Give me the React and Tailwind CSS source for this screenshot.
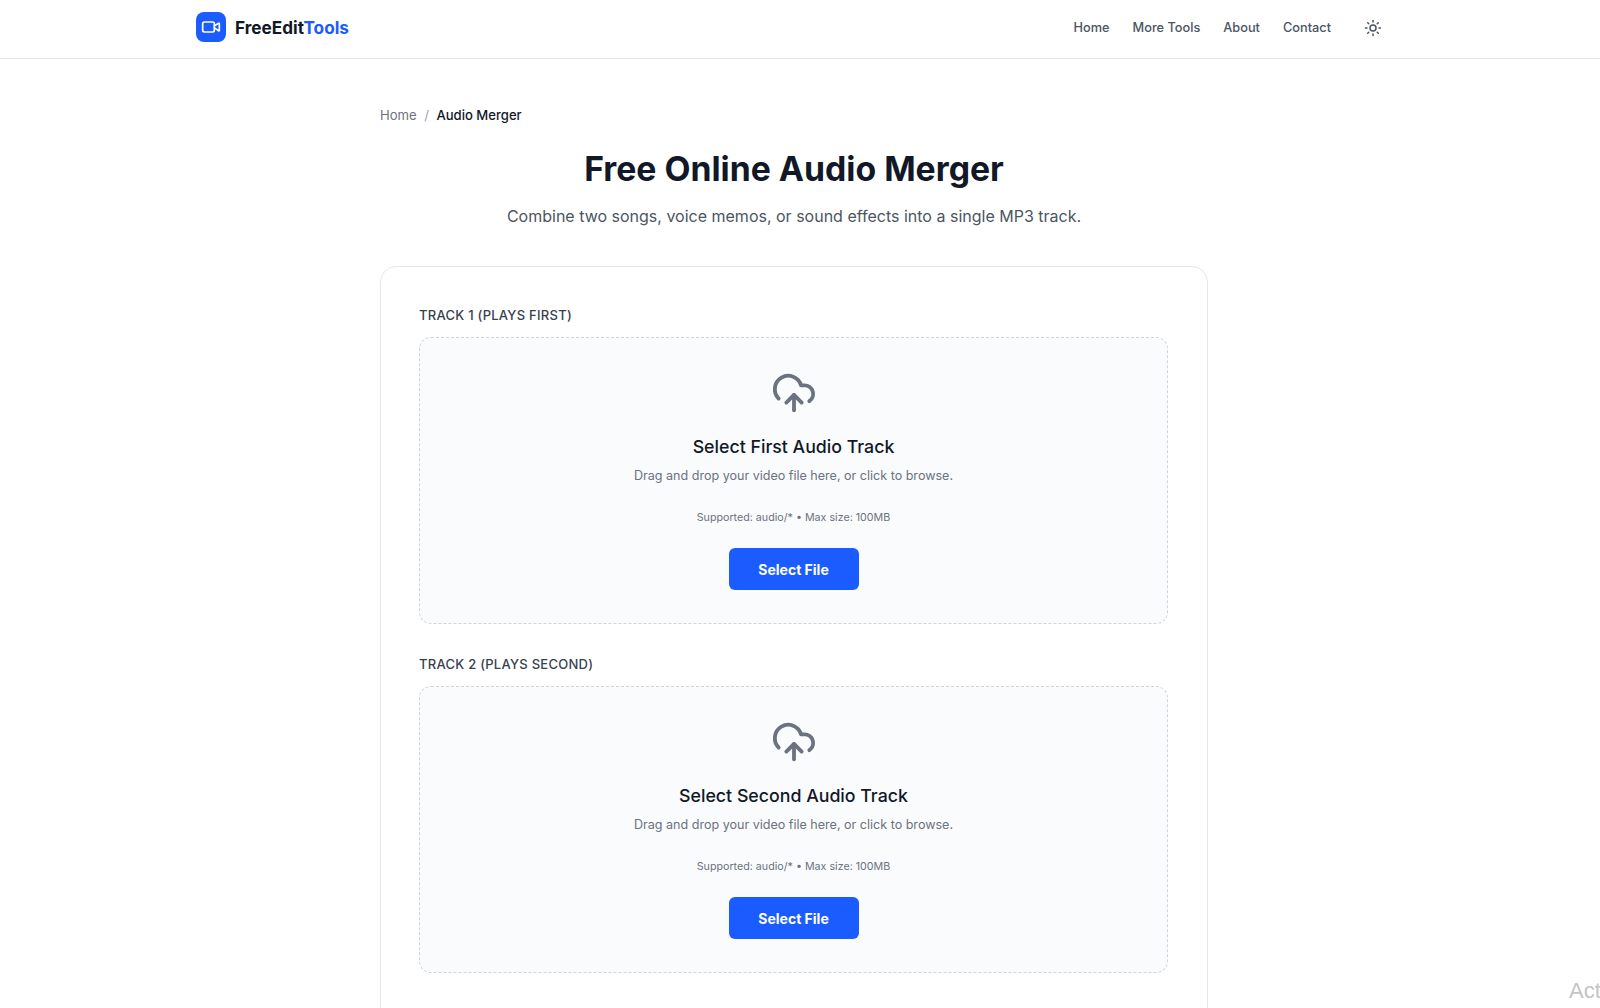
import React from "react";
import { CloudUpload, Sun, Video } from "lucide-react";

function Drop({ title }) {
  return (
    <div className="h-[287px] rounded-xl border border-dashed border-[#d1d5db] bg-[#fafbfd] flex flex-col items-center pt-[32px]">
      <CloudUpload className="w-[46px] h-[46px] text-[#6b7280]" strokeWidth={2} />
      <h3 className="mt-[17px] text-[17.75px] leading-7 font-medium text-[#111827]">{title}</h3>
      <p className="mt-[5px] text-[12.55px] leading-5 text-[#6b7280]">Drag and drop your video file here, or click to browse.</p>
      <p className="mt-[22px] text-[10.7px] leading-5 text-[#6b7280]">Supported: audio/* • Max size: 100MB</p>
      <button className="mt-[20px] w-[130px] h-[42px] rounded-md bg-[#1a5cff] text-white text-[14px] font-bold">Select File</button>
    </div>
  );
}

export default function App() {
  return (
    <div className="relative h-[1008px] overflow-hidden bg-white font-['Inter',sans-serif]">
      <header className="h-[59px] border-b border-[#e5e7eb] pr-3">
        <div className="mx-auto w-[1196px] h-[54px] flex items-center justify-between">
          <div className="flex items-center gap-[9px]">
            <div className="w-[30px] h-[30px] rounded-lg bg-[#1a5cff] flex items-center justify-center">
              <Video className="w-[20px] h-[20px] text-white" strokeWidth={2} />
            </div>
            <span className="mt-[1px] text-[17.2px] font-bold text-[#111827]">FreeEdit<span className="text-[#1a5cff]">Tools</span></span>
          </div>
          <nav className="mt-[1px] flex items-center gap-[23px] text-[12.75px] font-medium text-[#4b5563]">
            <a>Home</a>
            <a>More Tools</a>
            <a>About</a>
            <a>Contact</a>
            <Sun className="ml-[10px] mr-[10px] w-[18px] h-[18px] text-[#4b5563]" />
          </nav>
        </div>
      </header>
      <div className="w-[1588px]">
        <main className="mx-auto w-[828px] pt-[46px]">
          <div className="flex items-center gap-[7.5px] text-[13.1px] leading-5">
            <span className="text-[#6b7280]">Home</span>
            <span className="text-[#9ca3af]">/</span>
            <span className="text-[#111827] font-medium">Audio Merger</span>
          </div>
          <h1 className="mt-[20px] text-center text-[33.75px] leading-[48px] font-bold text-[#111827]">Free Online Audio Merger</h1>
          <p className="mt-[11px] text-center text-[16px] leading-6 text-[#4b5563]">Combine two songs, voice memos, or sound effects into a single MP3 track.</p>
          <section className="mt-[38px] rounded-2xl border border-[#e5e7eb] bg-white pl-[38px] pr-[39px] pt-[38px] pb-10 h-[800px]">
            <div className="text-[13px] leading-5 font-medium tracking-[0.02em] text-[#374151]">TRACK 1 (PLAYS FIRST)</div>
            <div className="mt-[12px]"><Drop title="Select First Audio Track" /></div>
            <div className="mt-[30px] text-[13px] leading-5 font-medium tracking-[0.02em] text-[#374151]">TRACK 2 (PLAYS SECOND)</div>
            <div className="mt-[12px]"><Drop title="Select Second Audio Track" /></div>
          </section>
        </main>
      </div>
      <span className="absolute left-[1569px] top-[975px] text-[22px] leading-8 font-['Liberation_Sans',sans-serif] text-[#c4c4c4]">Act</span>
    </div>
  );
}
